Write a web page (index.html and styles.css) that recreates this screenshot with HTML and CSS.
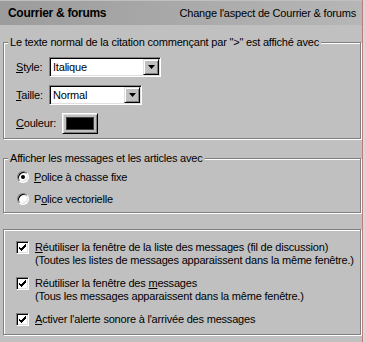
FILE: index.html
```html
<!DOCTYPE html>
<html lang="fr">
<head>
<meta charset="utf-8">
<title>Courrier &amp; forums</title>
<link rel="stylesheet" href="styles.css">
</head>
<body>
<div class="page">
  <div class="header">
    <span class="h-title">Courrier &amp; forums</span>
    <span class="h-desc">Change l'aspect de Courrier &amp; forums</span>
  </div>

  <fieldset class="group g1">
    <legend>Le texte normal de la citation commençant par "&gt;" est affiché avec</legend>
    <div class="rows">
      <div class="row">
        <span class="lbl"><u>S</u>tyle:</span>
        <div class="select w-style">
          <span class="sel-text">Italique</span>
          <span class="drop"><svg width="7" height="4" viewBox="0 0 7 4"><path d="M0 0h7L3.5 4z" fill="#000"/></svg></span>
        </div>
      </div>
      <div class="row">
        <span class="lbl"><u>T</u>aille:</span>
        <div class="select w-size">
          <span class="sel-text">Normal</span>
          <span class="drop"><svg width="7" height="4" viewBox="0 0 7 4"><path d="M0 0h7L3.5 4z" fill="#000"/></svg></span>
        </div>
      </div>
      <div class="row">
        <span class="lbl-color"><u>C</u>ouleur:</span>
        <div class="color-btn"><span class="swatch"></span></div>
      </div>
    </div>
  </fieldset>

  <fieldset class="group g2">
    <legend>Afficher les messages et les articles avec</legend>
    <div class="radios">
      <div class="radio-row">
        <span class="radio"><span class="dot"></span></span>
        <span><u>P</u>olice à chasse fixe</span>
      </div>
      <div class="radio-row">
        <span class="radio"></span>
        <span>P<u>o</u>lice vectorielle</span>
      </div>
    </div>
  </fieldset>

  <div class="group g3">
    <div class="check-row">
      <span class="check"><svg width="9" height="9" viewBox="0 0 9 9"><path d="M1 3.5 L3 5.5 L7.5 1 L7.5 3.5 L3 8 L1 6 Z" fill="#000" shape-rendering="crispEdges"/></svg></span>
      <span class="check-text"><u>R</u>éutiliser la fenêtre de la liste des messages (fil de discussion)<br>(Toutes les listes de messages apparaissent dans la même fenêtre.)</span>
    </div>
    <div class="check-row">
      <span class="check"><svg width="9" height="9" viewBox="0 0 9 9"><path d="M1 3.5 L3 5.5 L7.5 1 L7.5 3.5 L3 8 L1 6 Z" fill="#000" shape-rendering="crispEdges"/></svg></span>
      <span class="check-text">Réutiliser la fenêtre des <u>m</u>essages<br>(Tous les messages apparaissent dans la même fenêtre.)</span>
    </div>
    <div class="check-row">
      <span class="check"><svg width="9" height="9" viewBox="0 0 9 9"><path d="M1 3.5 L3 5.5 L7.5 1 L7.5 3.5 L3 8 L1 6 Z" fill="#000" shape-rendering="crispEdges"/></svg></span>
      <span class="check-text"><u>A</u>ctiver l'alerte sonore à l'arrivée des messages</span>
    </div>
  </div>
</div>
</body>
</html>
```

FILE: styles.css
```css
html, body {
  margin: 0;
  padding: 0;
  background: #d8d8d8;
}

body {
  font-family: "Liberation Sans", Arial, sans-serif;
  font-size: 11px;
  letter-spacing: -0.2px;
  line-height: 13px;
  color: #000;
}

.page {
  box-sizing: border-box;
  width: 363px;
  height: 342px;
  padding-top: 1px;
  background: #c0c0c0;
  border-right: 1px solid #c47a7a;
  overflow: hidden;
}

u {
  text-decoration: underline;
  text-underline-offset: 1px;
}

.header {
  height: 24px;
  display: flex;
  align-items: center;
  justify-content: space-between;
  padding: 0 6px 0 8px;
  background: linear-gradient(to right, #9c9c9c, #a8a8a8 45%, #b6b6b6);
}

.h-title {
  font-weight: bold;
  font-size: 12px;
  letter-spacing: -0.3px;
}

.group {
  margin: 0 1px 0 3px;
  padding: 0;
  border: 1px solid #808080;
  box-shadow: 1px 1px 0 #fff, inset 1px 1px 0 #fff;
  min-width: 0;
}

.group legend {
  margin-left: 4px;
  padding: 0 2px;
  background: #c0c0c0;
  line-height: 13px;
}

.g1 {
  margin-top: 11px;
}

.rows {
  display: flex;
  flex-direction: column;
  gap: 8px;
  padding: 8px 0 5px 12px;
}

.row {
  display: flex;
  align-items: center;
  height: 20px;
}

.lbl {
  width: 33px;
}

.lbl-color {
  width: 46px;
}

.select {
  box-sizing: border-box;
  height: 20px;
  display: flex;
  align-items: center;
  justify-content: space-between;
  background: #fff;
  border: 1px solid;
  border-color: #808080 #fff #fff #808080;
  box-shadow: inset 1px 1px 0 #000, inset -1px -1px 0 #dfdfdf;
  padding: 1px 1px 1px 3px;
}

.w-style { width: 112px; }
.w-size { width: 93px; }

.drop {
  box-sizing: border-box;
  width: 16px;
  height: 16px;
  display: flex;
  align-items: center;
  justify-content: center;
  background: #c0c0c0;
  border: 1px solid;
  border-color: #dfdfdf #000 #000 #dfdfdf;
  box-shadow: inset 1px 1px 0 #fff, inset -1px -1px 0 #808080;
}

.drop svg { display: block; }

.color-btn {
  box-sizing: border-box;
  width: 36px;
  height: 21px;
  padding: 3px;
  background: #c0c0c0;
  border: 1px solid;
  border-color: #fff #000 #000 #fff;
  box-shadow: inset 1px 1px 0 #dfdfdf, inset -1px -1px 0 #808080;
  display: flex;
}

.swatch {
  flex: 1;
  background: #000;
  border: 1px solid #404040;
}

.g2 {
  margin-top: 13px;
}

.radios {
  display: flex;
  flex-direction: column;
  gap: 6px;
  padding: 4px 0 5px 13px;
}

.radio-row {
  display: flex;
  align-items: center;
  gap: 5px;
  height: 16px;
}

.radio {
  box-sizing: border-box;
  width: 12px;
  height: 12px;
  border-radius: 50%;
  background: #fff;
  border: 1px solid;
  border-color: #808080 #fff #fff #808080;
  box-shadow: inset 1px 1px 0 #000, inset -1px -1px 0 #dfdfdf;
  display: flex;
  align-items: center;
  justify-content: center;
}

.dot {
  width: 4px;
  height: 4px;
  border-radius: 50%;
  background: #000;
}

.g3 {
  margin-top: 16px;
  padding: 11px 0 8px 12px;
  display: flex;
  flex-direction: column;
  gap: 10px;
}

.check-row {
  display: flex;
  align-items: flex-start;
  gap: 6px;
}

.check {
  box-sizing: border-box;
  flex: none;
  width: 13px;
  height: 13px;
  background: #fff;
  border: 1px solid;
  border-color: #808080 #fff #fff #808080;
  box-shadow: inset 1px 1px 0 #000, inset -1px -1px 0 #dfdfdf;
  display: flex;
  align-items: center;
  justify-content: center;
}

.check svg { display: block; }

.check-text {
  white-space: nowrap;
}
```
